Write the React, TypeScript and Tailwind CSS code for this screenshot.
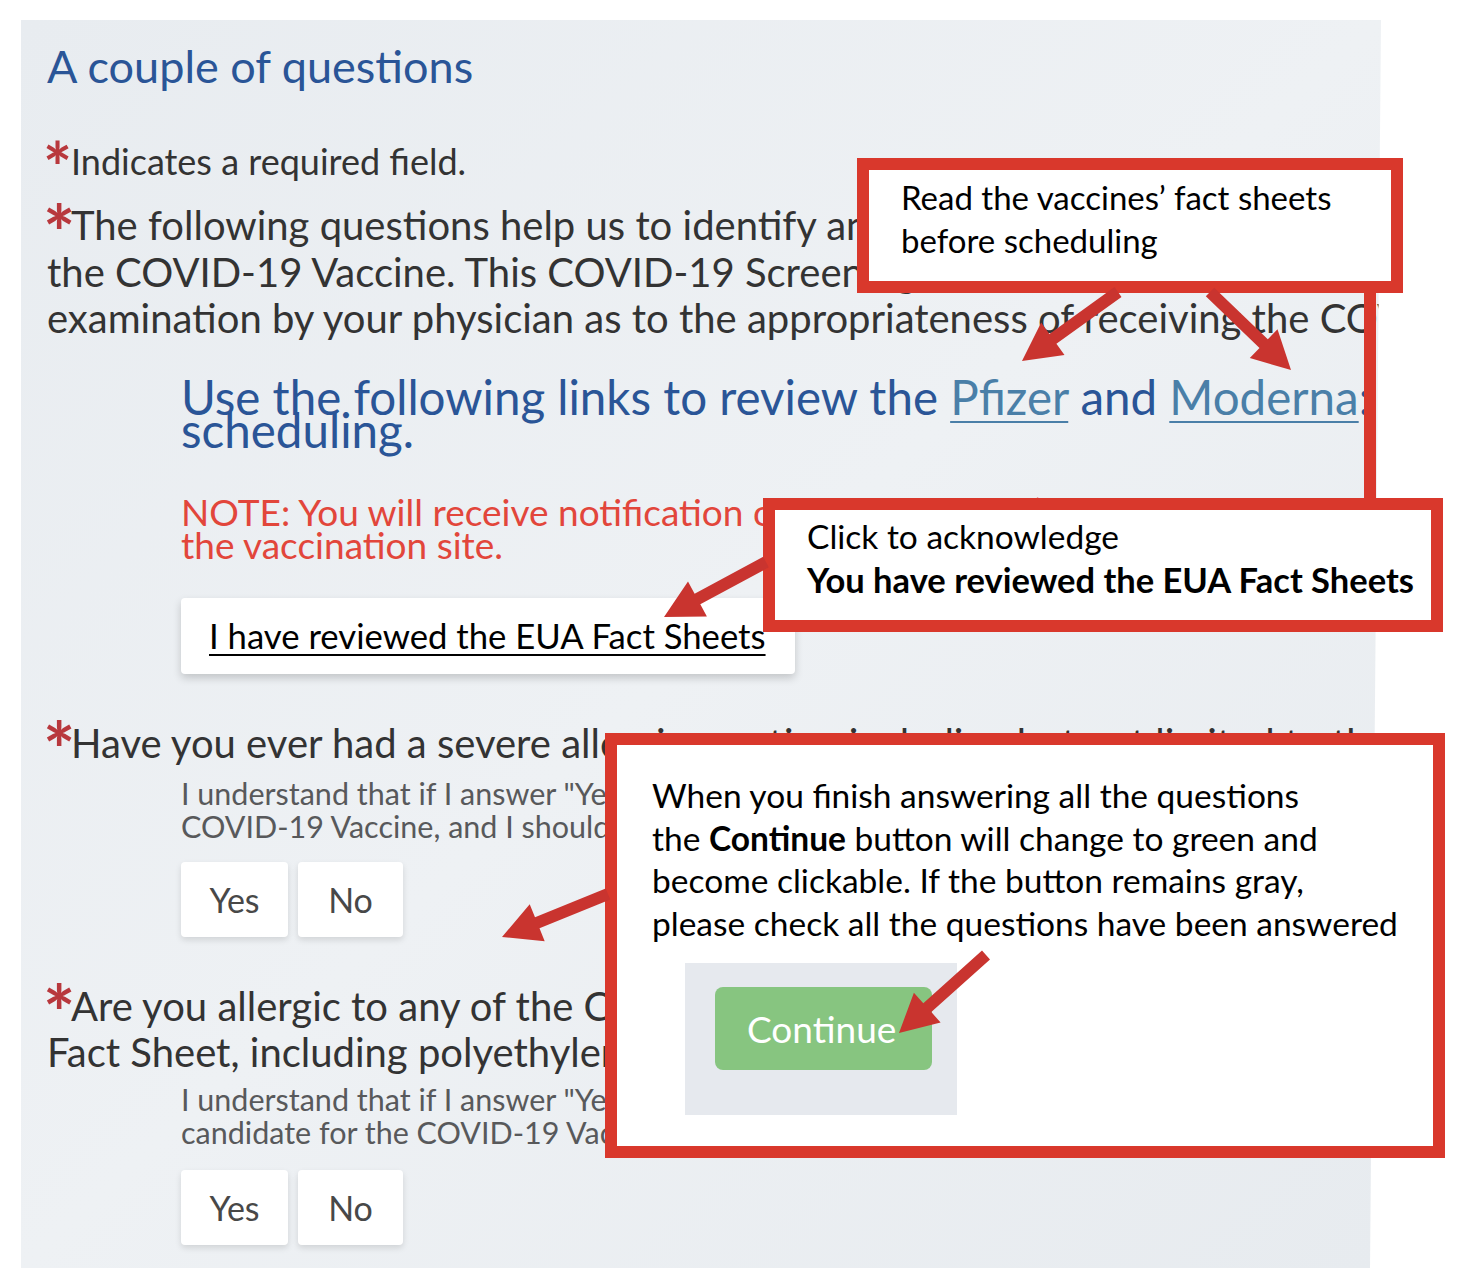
type Pt = [number, number];

const arrows: [Pt, Pt][] = [
  [[1118, 292], [1022, 361]],
  [[1210, 292], [1291, 370]],
  [[766, 562], [664, 617]],
  [[608, 894], [502, 937]],
  [[986, 955], [899, 1033]],
];

function arrowPoints(from: Pt, to: Pt) {
  const shaft = 12;
  const headLen = 38;
  const headW = 40;
  const dx = to[0] - from[0];
  const dy = to[1] - from[1];
  const len = Math.hypot(dx, dy);
  const ux = dx / len;
  const uy = dy / len;
  const nx = -uy;
  const ny = ux;
  const bx = to[0] - ux * headLen;
  const by = to[1] - uy * headLen;
  const pts: Pt[] = [
    [from[0] + (nx * shaft) / 2, from[1] + (ny * shaft) / 2],
    [bx + (nx * shaft) / 2, by + (ny * shaft) / 2],
    [bx + (nx * headW) / 2, by + (ny * headW) / 2],
    to,
    [bx - (nx * headW) / 2, by - (ny * headW) / 2],
    [bx - (nx * shaft) / 2, by - (ny * shaft) / 2],
    [from[0] - (nx * shaft) / 2, from[1] - (ny * shaft) / 2],
  ];
  return pts.map((p) => `${p[0].toFixed(1)},${p[1].toFixed(1)}`).join(' ');
}

// red "required" mark, drawn large like the original site's asterisk
function Star() {
  return (
    <span className="inline-block w-[24px] -ml-[4px] mr-[4px] text-[#b8383d] font-bold text-[1.9em] leading-[0] align-[-0.27em]">*</span>
  );
}

function YesNo() {
  return (
    <div className="flex gap-[10px]">
      <button className="w-[107px] h-[75px] bg-white rounded-[4px] shadow-[0_3px_6px_rgba(0,0,0,0.12)] text-[34px] text-[#484848]">
        Yes
      </button>
      <button className="w-[105px] h-[75px] bg-white rounded-[4px] shadow-[0_3px_6px_rgba(0,0,0,0.12)] text-[34px] text-[#484848]">
        No
      </button>
    </div>
  );
}

function Panel() {
  return (
    <div className="w-[1360px] h-[1248px] overflow-hidden bg-gradient-to-br from-[#e8ecf0] via-[#eef1f4] to-[#e7ebef] [clip-path:polygon(0_0,100%_0,calc(100%-11px)_100%,0_100%)] pl-[26px] pt-[24px] text-[#333] whitespace-nowrap">
      <h1 className="text-[45px] leading-[45px] text-[#2a5597]">A couple of questions</h1>

      <p className="mt-[54px] text-[36px] leading-[36px]">
        <Star />
        Indicates a required field.
      </p>

      <p className="mt-[23px] text-[40px] leading-[46.5px]">
        <Star />
        The following questions help us to identify anyone who should not receive
        <br />
        the COVID-19 Vaccine. This COVID-19 Screening Questionnaire is not a substitute for
        <br />
        examination by your physician as to the appropriateness of receiving the COVID-19 Vaccine.
      </p>

      <div className="ml-[134px]">
        <p className="mt-[38px] text-[47.5px] leading-[33px] text-[#2a5597]">
          Use the following links to review the{' '}
          <a className="text-[#4a7fa8] underline decoration-[2px] underline-offset-[6px]">Pfizer</a> and{' '}
          <a className="text-[#4a7fa8] underline decoration-[2px] underline-offset-[6px]">Moderna</a>: fact sheets before
          <br />
          scheduling.
        </p>

        <p className="mt-[49px] text-[37px] leading-[33px] text-[#e2463b]">
          NOTE: You will receive notification of which vaccine (Pfizer-BioNTech or Moderna) at
          <br />
          the vaccination site.
        </p>

        <button className="mt-[37px] w-[614px] h-[76px] bg-white rounded-[4px] shadow-[0_4px_8px_rgba(0,0,0,0.18)] pl-[28px] flex items-center text-[34.7px] leading-[35px] text-black underline decoration-[2px] underline-offset-[5px]">
          I have reviewed the EUA Fact Sheets
        </button>
      </div>

      <p className="mt-[46px] text-[40px] leading-[46px]">
        <Star />
        Have you ever had a severe allergic reaction including but not limited to the
      </p>
      <div className="ml-[134px]">
        <p className="mt-[11px] text-[30.5px] leading-[33px] text-[#58595b]">
          I understand that if I answer "Yes" to this question I am not a candidate for the
          <br />
          COVID-19 Vaccine, and I should not schedule an appointment.
        </p>
        <div className="mt-[19px]">
          <YesNo />
        </div>
      </div>

      <p className="mt-[46px] text-[40px] leading-[46px]">
        <Star />
        Are you allergic to any of the COVID-19 Vaccine components listed in the EUA
        <br />
        Fact Sheet, including polyethylene glycol (PEG) or polysorbate?
      </p>
      <div className="ml-[134px]">
        <p className="mt-[8px] text-[30.5px] leading-[33px] text-[#58595b]">
          I understand that if I answer "Yes" to this question I am not a
          <br />
          candidate for the COVID-19 Vaccine at this time.
        </p>
        <div className="mt-[21px]">
          <YesNo />
        </div>
      </div>
    </div>
  );
}

function Callouts() {
  return (
    <>
      <div className="absolute left-[857px] top-[158px] w-[546px] h-[135px] border-[12px] border-[#d9382c] bg-white pl-[32px] pt-[6px] text-[33px] leading-[43px] text-black whitespace-nowrap">
        Read the vaccines’ fact sheets
        <br />
        before scheduling
      </div>
      <div className="absolute left-[1364px] top-[292px] w-[12px] h-[207px] bg-[#d9382c]" />

      <div className="absolute left-[763px] top-[498px] w-[680px] h-[134px] border-[12px] border-[#d9382c] bg-white pl-[32px] pt-[5px] text-[33.5px] leading-[43px] text-black whitespace-nowrap">
        Click to acknowledge
        <br />
        <span className="font-bold text-[34.5px]">You have reviewed the EUA Fact Sheets</span>
      </div>

      <div className="absolute left-[605px] top-[733px] w-[840px] h-[425px] border-[12px] border-[#d9382c] bg-white pl-[35px] pt-[29px] text-[33.5px] leading-[42.6px] text-black whitespace-nowrap">
        <p>
          When you finish answering all the questions
          <br />
          the <span className="font-bold">Continue</span> button will change to green and
          <br />
          become clickable. If the button remains gray,
          <br />
          please check all the questions have been answered
        </p>
        <div className="mt-[19px] ml-[33px] w-[272px] h-[152px] bg-[#e6e9ee] pl-[30px] pt-[24px]">
          <div className="w-[217px] h-[83px] rounded-lg bg-[#87c580] pl-[32px] flex items-center text-[37px] text-white">
            Continue
          </div>
        </div>
      </div>

      <svg className="absolute inset-0 pointer-events-none" width="1460" height="1284" viewBox="0 0 1460 1284">
        {arrows.map(([a, b], i) => (
          <polygon key={i} points={arrowPoints(a, b)} fill="#c9342f" />
        ))}
      </svg>
    </>
  );
}

export default function App() {
  return (
    <div className="relative w-[1460px] h-[1284px] bg-white overflow-hidden font-['Lato','Liberation_Sans',sans-serif]">
      <div className="pt-5 pl-[21px]">
        <Panel />
      </div>
      <Callouts />
    </div>
  );
}
